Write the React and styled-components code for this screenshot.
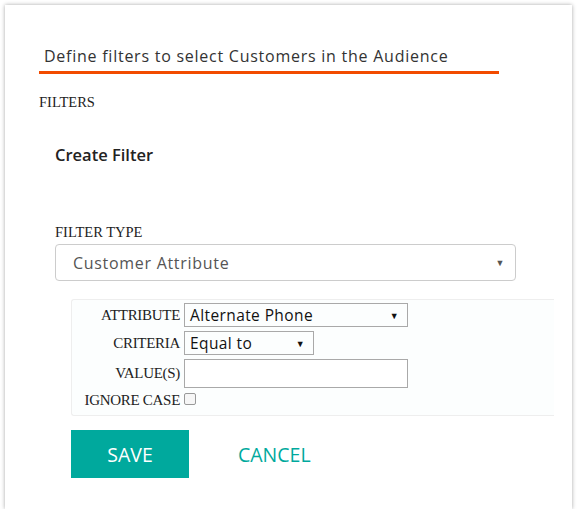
import React from "react";
import styled, { createGlobalStyle } from "styled-components";

const Global = createGlobalStyle`
  body { margin: 0; background: #fff; font-family: "Liberation Serif", serif; }
`;

const Card = styled.div`
  margin: 5px 7px 0 5px;
  width: 567px;
  height: 504px;
  box-sizing: border-box;
  background: #fff;
  box-shadow: 0 0 4px rgba(0,0,0,0.35);
  padding: 40px 0 0 34px;
`;

const Heading = styled.div`
  width: 455px;
  padding: 0 0 4px 5px;
  border-bottom: 3px solid #f24b00;
  font-family: "Open Sans", sans-serif;
  font-size: 16px;
  color: #333;
  letter-spacing: 0.75px;
`;

const Section = styled.div`
  margin-top: 20px;
  font-size: 14.5px;
  color: #222;
`;

const Title = styled.h2`
  margin: 32px 0 0 16px;
  font-family: "Open Sans", sans-serif;
  font-weight: 600;
  font-size: 16.5px;
  color: #222;
`;

const Field = styled.div`
  margin: 58px 0 0 16px;
  font-size: 14.5px;
  color: #222;
`;

const BigSelect = styled.div`
  margin-top: 3px;
  width: 461px;
  height: 37px;
  box-sizing: border-box;
  border: 1px solid #ccc;
  border-radius: 4px;
  display: flex;
  align-items: center;
  justify-content: space-between;
  padding: 0 10px 0 17px;
  font-family: "Open Sans", sans-serif;
  font-size: 16px;
  letter-spacing: 0.7px;
  color: #555;
`;

const Arrow = styled.span`
  font-size: 9px;
  color: ${p => p.$color || "#555"};
`;

const Panel = styled.div`
  margin: 18px 0 0 32px;
  width: 483px;
  box-sizing: border-box;
  border: 1px solid #eee;
  border-right: none;
  border-radius: 3px 0 0 3px;
  background: #fcfefe;
  padding: 3px 0 6px 3px;
  display: grid;
  grid-template-columns: 105px auto;
  column-gap: 4px;
  row-gap: 4px;
  align-items: center;
`;

const Label = styled.div`
  text-align: right;
  font-size: 15px;
  color: #222;
  letter-spacing: -0.3px;
`;

const Select = styled.div`
  width: ${p => p.$w}px;
  height: 24px;
  box-sizing: border-box;
  border: 1px solid #a9a9a9;
  display: flex;
  align-items: center;
  justify-content: space-between;
  padding: 0 8px 0 5px;
  font-family: "Open Sans", sans-serif;
  font-size: 15.5px;
  letter-spacing: 0.4px;
  color: #111;
`;

const Input = styled.div`
  width: 224px;
  height: 29px;
  box-sizing: border-box;
  border: 1px solid #a9a9a9;
  background: #fff;
`;

const Check = styled.div`
  width: 12px;
  height: 12px;
  box-sizing: border-box;
  border: 1px solid #999;
  border-radius: 2px;
  background: #f6f6f6;
  margin-bottom: 4px;
`;

const Actions = styled.div`
  margin: 14px 0 0 32px;
  display: flex;
  align-items: center;
  gap: 49px;
  font-family: "Open Sans", sans-serif;
  font-size: 19.5px;
`;

const SaveButton = styled.button`
  width: 118px;
  height: 48px;
  border: none;
  background: #00a99d;
  color: #fff;
  font: inherit;
`;

const CancelButton = styled.button`
  border: none;
  background: none;
  color: #00a99d;
  font: inherit;
  padding: 0;
`;

export default function App() {
  return (
    <>
      <Global />
      <Card>
        <Heading>Define filters to select Customers in the Audience</Heading>
        <Section>FILTERS</Section>
        <Title>Create Filter</Title>
        <Field>
          FILTER TYPE
          <BigSelect>Customer Attribute<Arrow>▼</Arrow></BigSelect>
        </Field>
        <Panel>
          <Label>ATTRIBUTE</Label>
          <Select $w={224}>Alternate Phone<Arrow $color="#111">▼</Arrow></Select>
          <Label>CRITERIA</Label>
          <Select $w={130}>Equal to<Arrow $color="#111">▼</Arrow></Select>
          <Label>VALUE(S)</Label>
          <Input />
          <Label>IGNORE CASE</Label>
          <Check />
        </Panel>
        <Actions>
          <SaveButton>SAVE</SaveButton>
          <CancelButton>CANCEL</CancelButton>
        </Actions>
      </Card>
    </>
  );
}
